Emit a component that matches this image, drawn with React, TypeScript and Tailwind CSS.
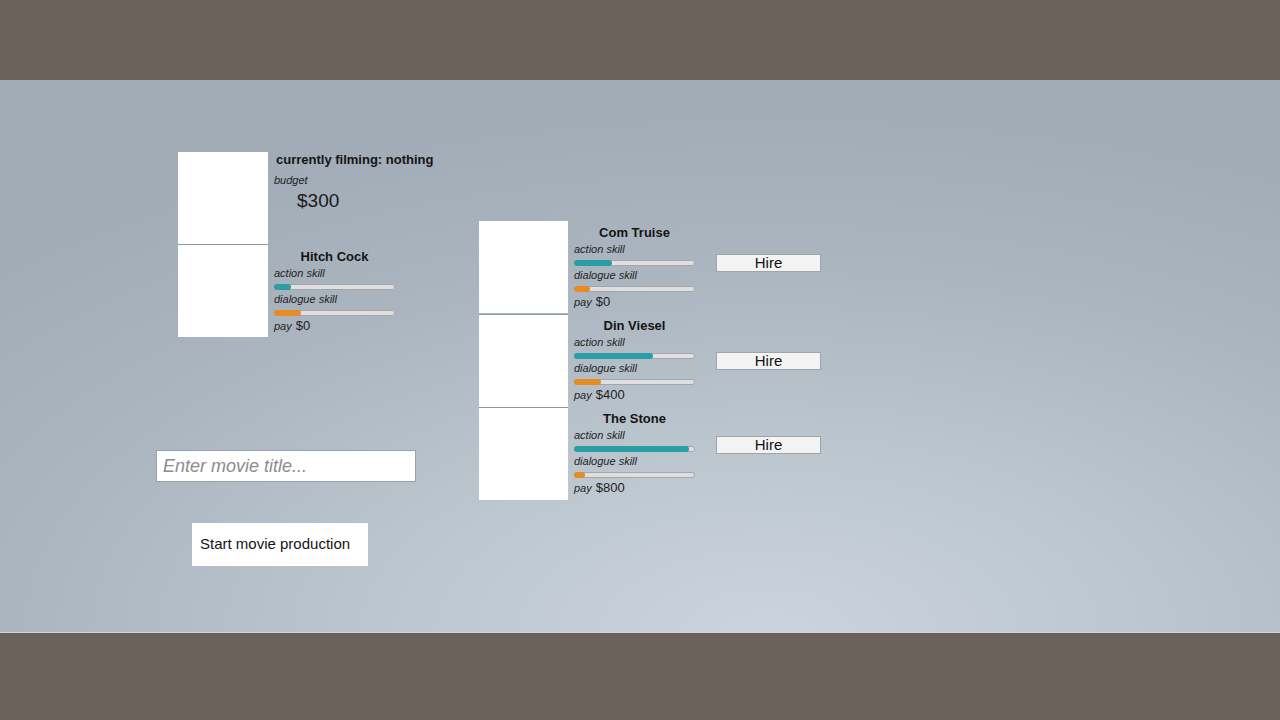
import React from "react";

type Actor = {
  name: string;
  action: number;
  dialogue: number;
  pay: number;
  hireTop: number;
};

const actors: Actor[] = [
  { name: "Com Truise", action: 31, dialogue: 13, pay: 0, hireTop: 33 },
  { name: "Din Viesel", action: 65, dialogue: 22, pay: 400, hireTop: 38 },
  { name: "The Stone", action: 95, dialogue: 9, pay: 800, hireTop: 29 },
];

function SkillBar({ value, color }: { value: number; color: string }) {
  return (
    <div className="mt-[4px] h-[6px] w-[121px] rounded-full bg-[#dfdfdf] shadow-[inset_0_0_0_1px_#a3a7ab]">
      <div className={`h-full rounded-full ${color}`} style={{ width: `${value}%` }} />
    </div>
  );
}

function Stats({ name, action, dialogue, pay }: { name: string; action: number; dialogue: number; pay: number }) {
  return (
    <div className="w-[121px] flex flex-col">
      <div className="mt-[4px] text-center text-[13px] leading-[16px] font-bold text-[#141414]">{name}</div>
      <div className="mt-[1px] text-[11px] leading-[14px] italic text-[#1e1e1e]">action skill</div>
      <SkillBar value={action} color="bg-[#2a9ea4]" />
      <div className="mt-[2px] text-[11px] leading-[14px] italic text-[#1e1e1e]">dialogue skill</div>
      <SkillBar value={dialogue} color="bg-[#e38d24]" />
      <div className="mt-[3px] flex items-baseline gap-[4px] leading-[14px] text-[#1e1e1e]">
        <span className="text-[11px] italic">pay</span>
        <span className="text-[13px]">${pay}</span>
      </div>
    </div>
  );
}

export default function App() {
  return (
    <div
      className="h-screen w-full flex flex-col bg-[#6a615b] overflow-hidden"
      style={{ fontFamily: '"Liberation Sans", Arial, sans-serif' }}
    >
      <div className="h-[80px] shrink-0" />

      <main className="h-[553px] shrink-0 flex pt-[72px] pl-[156px] border-b border-[#cdd3d9] bg-[radial-gradient(ellipse_85%_95%_at_60%_100%,#cbd4dc_0%,#bcc6cf_35%,#aab5bf_70%,#a1acb7_100%)]">
        {/* director + production controls */}
        <div className="w-[323px] shrink-0 flex flex-col">
          <div className="ml-[22px] flex flex-col">
            <div className="flex h-[92px]">
              <div className="w-[90px] h-[92px] bg-white" />
              <div className="ml-[6px] flex flex-col">
                <div className="ml-[2px] text-[13px] leading-[16px] font-bold text-[#141414] whitespace-nowrap">
                  currently filming: nothing
                </div>
                <div className="mt-[5px] text-[11px] leading-[14px] italic text-[#1e1e1e]">budget</div>
                <div className="mt-[3px] ml-[23px] text-[19px] leading-[22px] text-[#1a1a1a]">$300</div>
              </div>
            </div>
            <div className="flex h-[93px]">
              <div className="w-[90px] h-[93px] bg-white border-t border-[#8d99a3]" />
              <div className="ml-[6px] pt-[1px]">
                <Stats name="Hitch Cock" action={14} dialogue={22} pay={0} />
              </div>
            </div>
          </div>

          <input
            placeholder="Enter movie title..."
            className="mt-[113px] w-[260px] h-[32px] px-[6px] bg-white border border-[#9aa0a6] text-[18px] italic text-[#222] placeholder:text-[#8c8c8c] outline-none"
          />

          <button className="mt-[41px] ml-[36px] w-[176px] h-[43px] bg-white text-[15px] text-[#141414] text-left pl-[8px]">
            Start movie production
          </button>
        </div>

        {/* actors for hire */}
        <div className="mt-[69px] flex flex-col">
          {actors.map((a, i) => (
            <div key={a.name} className="flex h-[93px]">
              <div className={`w-[89px] bg-white ${i > 0 ? "h-[93px] border-t border-[#8d99a3]" : "h-[92px]"}`} />
              <div className="ml-[6px]">
                <Stats name={a.name} action={a.action} dialogue={a.dialogue} pay={a.pay} />
              </div>
              <button
                className="ml-[21px] w-[105px] h-[18px] bg-[#f3f3f3] border border-[#9ea4aa] text-[15px] leading-[16px] text-[#111]"
                style={{ marginTop: a.hireTop }}
              >
                Hire
              </button>
            </div>
          ))}
        </div>
      </main>

      <div className="flex-1" />
    </div>
  );
}
